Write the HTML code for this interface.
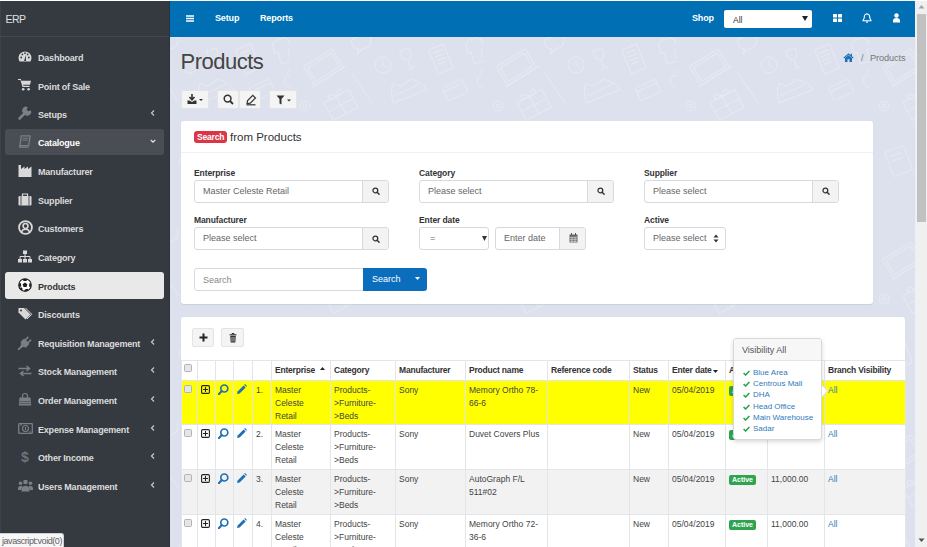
<!DOCTYPE html>
<html><head><meta charset="utf-8">
<style>
*{box-sizing:border-box;margin:0;padding:0}
html,body{width:927px;height:547px;overflow:hidden}
body{position:relative;background:#dde1ed;font-family:"Liberation Sans",sans-serif;color:#333}
.abs{position:absolute}
#topline{left:0;top:0;width:927px;height:1px;background:#fff;z-index:50}
#side{left:0;top:0;width:170px;height:547px;background:#353940;border-right:1px solid #2e3238;box-shadow:inset 1px 0 0 #3d4148}
#brand{left:0;top:0;width:169px;height:37px;border-bottom:1px solid #42474e;color:#e0e0e0;font-size:10.5px;padding:13px 0 0 5.5px;letter-spacing:-0.5px}
.mi{position:absolute;left:5px;width:159px;height:26px;color:#dcdcdc;font-weight:bold;font-size:9px;letter-spacing:-0.2px;border-radius:3px}
.mi .t{position:absolute;left:33px;top:8.7px;white-space:nowrap}
.mi .ic{position:absolute;left:13px;top:6px;width:14px;height:14px;overflow:visible}
.mi .ch{position:absolute;left:144px;top:8px;width:8px;height:8px}
.mi.cat{background:#4a4e54;color:#fff}
.mi.act{background:#e9e9e9;color:#333}
.mi.act .t{top:9.7px}
#top{left:170px;top:0;width:746px;height:37px;background:#006fb4;color:#fff}
#top .n{position:absolute;top:13px;font-size:9px;font-weight:bold;white-space:nowrap;letter-spacing:-0.15px}
#scroll{left:915px;top:0;width:12px;height:547px;background:#f0f0f0}
#thumb{left:917px;top:14px;width:9px;height:208px;background:#c1c1c1}
h1{position:absolute;left:180.5px;top:48.5px;font-size:22px;font-weight:normal;color:#444;white-space:nowrap;letter-spacing:-0.5px}
.btn{position:absolute;background:#f4f4f4;border:1px solid #e4e4e4;border-radius:2px}
.card{position:absolute;background:#fff;border-radius:3px;box-shadow:0 1px 1px rgba(0,0,0,.08)}
.lbl{position:absolute;font-size:8.5px;font-weight:bold;color:#333;white-space:nowrap;letter-spacing:-0.1px}
.inp{position:absolute;height:23px;border:1px solid #d6d9de;border-radius:3px;background:#fff;font-size:9px;color:#666;padding:5px 0 0 8px;white-space:nowrap}
.add{position:absolute;top:0;right:0;width:26px;height:21px;background:#f3f3f3;border-left:1px solid #d6d9de;border-radius:0 3px 3px 0}

table{border-collapse:collapse;table-layout:fixed;position:absolute;left:181px;top:360px;font-size:9px;color:#333}
td,th{border:1px solid #e3e5e8;padding:0 0 0 3px;vertical-align:top;text-align:left;white-space:normal}
th{height:20px;font-weight:bold;font-size:8.5px;padding-top:4px;white-space:nowrap;letter-spacing:-0.2px}
td{height:45px;padding-top:3px;line-height:13px;font-size:8.5px;white-space:nowrap;overflow:hidden;color:#444}
tr.y td{background:#ffff00;height:44px}
tr.g td{background:#f2f2f2}
.cb{display:block;width:8px;height:8px;border:1px solid #b3b3b3;border-radius:1.5px;background:#e6e6e6;margin:0 0 0 0}
th:first-child,td:first-child{padding-left:2px}
th:first-child .cb{margin-top:-1px}
td:first-child .cb{margin-top:0.5px}
.lnk{color:#2f7bbd}
.badge{display:inline-block;background:#2ea44f;color:#fff;font-size:7px;font-weight:bold;padding:1px 3px;border-radius:2px;line-height:8px}
.pop{position:absolute;left:733px;top:338px;width:89px;height:102px;background:#fff;border:1px solid #d9d9d9;border-radius:3px;box-shadow:0 2px 4px rgba(0,0,0,.15);font-size:8px}
.pop .hd{height:22px;background:#f7f7f7;border-bottom:1px solid #e5e5e5;padding:5.7px 0 0 8px;font-size:9px;color:#555;border-radius:3px 3px 0 0}
.pop .it{position:absolute;left:9px;color:#2f7bbd;white-space:nowrap;padding-left:10px}
.pop .it b{color:#2ea44f;margin-right:3px;font-size:8px}
#status{left:0;top:533px;width:64px;height:14px;background:#f7f7f7;border:1px solid #d0d0d0;border-left:0;border-bottom:0;border-radius:0 3px 0 0;font-size:9px;color:#606060;padding:2px 0 0 2px;white-space:nowrap;letter-spacing:-0.45px}
</style></head><body>
<div id="topline" class="abs"></div>
<div id="side" class="abs">
  <div id="brand" class="abs">ERP</div>
  <div class="mi" style="top:44px"><svg class="ic" viewBox="0 0 14 12" style="top:6px;width:14px;height:12px"><path d="M1.5 11.5 A6.5 6.5 0 1 1 12.5 11.5 Z" fill="#d9d9d9"/><circle cx="3.2" cy="7.5" r=".9" fill="#353940"/><circle cx="4.4" cy="4.4" r=".9" fill="#353940"/><circle cx="7" cy="3.2" r=".9" fill="#353940"/><circle cx="9.6" cy="4.4" r=".9" fill="#353940"/><circle cx="10.8" cy="7.5" r=".9" fill="#353940"/><path d="M6.1 11 L7.8 5 L8.1 11Z" fill="#353940"/></svg><span class="t">Dashboard</span></div>
  <div class="mi" style="top:73px"><svg class="ic" viewBox="0 0 14 12" style="top:6px;width:14px;height:12px"><path d="M0 1 H2.5 L4.5 8 H11.5 V6.8 H5.4 L5.1 5.8 H12 L13 1.8 H3.3 L2.9 0 H0Z" fill="#d9d9d9"/><rect x="5" y="2.6" width="6.5" height="2.4" fill="#d9d9d9"/><circle cx="5.2" cy="10.2" r="1.3" fill="#d9d9d9"/><circle cx="10.6" cy="10.2" r="1.3" fill="#d9d9d9"/></svg><span class="t">Point of Sale</span></div>
  <div class="mi" style="top:101px"><svg class="ic" viewBox="0 0 14 14" style="top:5px;width:14px;height:14px"><path d="M1.5 12.5 L7 7" stroke="#7b7f85" stroke-width="2.6" stroke-linecap="round"/><path d="M6 7.5 A3.6 3.6 0 0 0 12.8 4.3 L10.8 5.2 L9.2 4.6 L8.8 3.2 L9.8 1.2 A3.6 3.6 0 0 0 6 7.5Z" fill="#7b7f85"/></svg><span class="t">Setups</span><svg class="ch" viewBox="0 0 8 8"><path d="M5 1.5 L2.5 4 L5 6.5" fill="none" stroke="#c8c8c8" stroke-width="1.2"/></svg></div>
  <div class="mi cat" style="top:129px"><svg class="ic" viewBox="0 0 14 14" style="top:6px;width:14px;height:13px"><path d="M3 1 H12.5 L11 11.5 H1.5 Z" fill="none" stroke="#7b7f85" stroke-width="1.4"/><path d="M1.5 11.5 L1.2 13 H11 " fill="none" stroke="#7b7f85" stroke-width="1.2"/><path d="M4.5 3.5 H10.5 M4.2 5.5 H10" stroke="#7b7f85" stroke-width="1"/></svg><span class="t">Catalogue</span><svg class="ch" viewBox="0 0 8 8"><path d="M1.8 3 L4 5.2 L6.2 3" fill="none" stroke="#e0e0e0" stroke-width="1.3"/></svg></div>
  <div class="mi" style="top:158px"><svg class="ic" viewBox="0 0 14 13" style="top:6px;width:14px;height:13px"><path d="M0.5 13 V1 H3 V5 L6.5 2.5 V5 L10 2.5 V5 L13.5 2.5 V13Z" fill="#d9d9d9"/></svg><span class="t">Manufacturer</span></div>
  <div class="mi" style="top:187px"><svg class="ic" viewBox="0 0 14 13" style="top:6px;width:14px;height:13px"><rect x="0.5" y="3" width="13" height="9.5" rx="1.2" fill="#d9d9d9"/><path d="M4.5 3 V1 H9.5 V3" fill="none" stroke="#d9d9d9" stroke-width="1.2"/><path d="M3 3 V12.5 M11 3 V12.5" stroke="#353940" stroke-width="0.8"/></svg><span class="t">Supplier</span></div>
  <div class="mi" style="top:215px"><svg class="ic" viewBox="0 0 14 14" style="top:5px;width:15px;height:15px"><circle cx="7" cy="7" r="6" fill="none" stroke="#d9d9d9" stroke-width="1.7"/><circle cx="7" cy="5.6" r="2.3" fill="none" stroke="#d9d9d9" stroke-width="1.5"/><path d="M3.2 11.3 Q4 8.6 7 8.6 Q10 8.6 10.8 11.3" fill="none" stroke="#d9d9d9" stroke-width="1.5"/></svg><span class="t">Customers</span></div>
  <div class="mi" style="top:244px"><svg class="ic" viewBox="0 0 14 13" style="top:6px;width:14px;height:13px"><rect x="5" y="0.5" width="4" height="3.5" fill="#d9d9d9"/><path d="M7 4 V6.5 M2 9 V6.5 H12 V9 M7 6.5 V9" stroke="#d9d9d9" stroke-width="1" fill="none"/><rect x="0" y="9" width="4" height="3.5" fill="#d9d9d9"/><rect x="5" y="9" width="4" height="3.5" fill="#d9d9d9"/><rect x="10" y="9" width="4" height="3.5" fill="#d9d9d9"/></svg><span class="t">Category</span></div>
  <div class="mi act" style="top:272px;height:27px"><svg class="ic" viewBox="0 0 14 14" style="top:6px;width:14px;height:14px"><circle cx="7" cy="7" r="6.3" fill="#fff" stroke="#1e1e1e" stroke-width="1.1"/><path d="M7 4.5 L9.4 6.3 L8.5 9.1 H5.5 L4.6 6.3Z" fill="#1e1e1e"/><path d="M4.6 1.2 Q7 0.2 9.4 1.2 L8.4 3 H5.6Z M12.6 4.4 Q13.4 6.8 12.7 9.4 L11 8.2 L11.3 5.6Z M10.7 12.2 Q8.6 13.6 6.1 13.5 L6.8 11.6 L9.4 10.7Z M1.4 9.4 Q0.6 6.8 1.4 4.4 L3 5.6 L3.3 8.2Z M3.5 12.4 Q1.9 11 1.5 9.9 L3.4 9.3 L4.8 10.9Z" fill="#1e1e1e"/></svg><span class="t">Products</span></div>
  <div class="mi" style="top:301px"><svg class="ic" viewBox="0 0 14 13" style="top:6px;width:14px;height:13px"><path d="M0.5 1 H6 L12.5 7.5 L7.5 12.5 L0.5 5.5Z" fill="#d9d9d9"/><circle cx="3" cy="3.4" r="1" fill="#353940"/><path d="M7.5 1 L13.8 7.3 L9 12" fill="none" stroke="#d9d9d9" stroke-width="1"/></svg><span class="t">Discounts</span></div>
  <div class="mi" style="top:330px"><svg class="ic" viewBox="0 0 14 14" style="top:5px;left:12px;width:16px;height:16px"><g transform="rotate(45 7 7)"><rect x="3.6" y="4.6" width="6.8" height="5.2" rx="1.3" fill="#7b7f85"/><path d="M5.3 4.8 V1.2 M8.7 4.8 V1.2" stroke="#7b7f85" stroke-width="1.4"/><path d="M5.2 9.6 H8.8 L8 12 H6Z" fill="#7b7f85"/><path d="M7 11.5 V15.5" stroke="#7b7f85" stroke-width="1.6"/></g></svg><span class="t">Requisition Management</span><svg class="ch" viewBox="0 0 8 8"><path d="M5 1.5 L2.5 4 L5 6.5" fill="none" stroke="#c8c8c8" stroke-width="1.2"/></svg></div>
  <div class="mi" style="top:358px"><svg class="ic" viewBox="0 0 14 12" style="top:7px;width:14px;height:12px"><path d="M0.5 3.5 H11 M8.5 1 L11.5 3.5 L8.5 6 M13.5 8.5 H3 M5.5 6 L2.5 8.5 L5.5 11" fill="none" stroke="#7b7f85" stroke-width="1.5"/></svg><span class="t">Stock Management</span><svg class="ch" viewBox="0 0 8 8"><path d="M5 1.5 L2.5 4 L5 6.5" fill="none" stroke="#c8c8c8" stroke-width="1.2"/></svg></div>
  <div class="mi" style="top:387px"><svg class="ic" viewBox="0 0 14 14" style="top:5px;width:14px;height:14px"><path d="M1.5 5.5 H12.5 L13.2 13.5 H0.8Z" fill="#7b7f85"/><path d="M4.5 7 V4 A2.5 2.5 0 0 1 9.5 4 V7" fill="none" stroke="#7b7f85" stroke-width="1.2"/><path d="M1.5 9.5 H12.5 M1.3 11.5 H12.7" stroke="#353940" stroke-width=".5"/></svg><span class="t">Order Management</span><svg class="ch" viewBox="0 0 8 8"><path d="M5 1.5 L2.5 4 L5 6.5" fill="none" stroke="#c8c8c8" stroke-width="1.2"/></svg></div>
  <div class="mi" style="top:416px"><svg class="ic" viewBox="0 0 15 11" style="top:7px;width:15px;height:11px"><rect x="0.7" y="0.7" width="13.6" height="9.6" rx=".5" fill="none" stroke="#7b7f85" stroke-width="1.3"/><circle cx="7.5" cy="5.5" r="3" fill="none" stroke="#7b7f85" stroke-width="1.1"/><path d="M7.5 4 V7" stroke="#7b7f85" stroke-width="1"/><path d="M2 2 H4 M11 9 H13" stroke="#7b7f85" stroke-width="1"/></svg><span class="t">Expense Management</span><svg class="ch" viewBox="0 0 8 8"><path d="M5 1.5 L2.5 4 L5 6.5" fill="none" stroke="#c8c8c8" stroke-width="1.2"/></svg></div>
  <div class="mi" style="top:444px"><svg class="ic" viewBox="0 0 14 14" style="top:5px;width:14px;height:15px"><text x="3" y="12.5" font-size="14" font-family="Liberation Sans" fill="#6f737a">$</text></svg><span class="t">Other Income</span><svg class="ch" viewBox="0 0 8 8"><path d="M5 1.5 L2.5 4 L5 6.5" fill="none" stroke="#c8c8c8" stroke-width="1.2"/></svg></div>
  <div class="mi" style="top:473px"><svg class="ic" viewBox="0 0 15 13" style="top:6px;width:15px;height:13px"><circle cx="7.5" cy="3" r="2.3" fill="#7b7f85"/><circle cx="2.5" cy="4.2" r="1.8" fill="#7b7f85"/><circle cx="12.5" cy="4.2" r="1.8" fill="#7b7f85"/><path d="M3.5 12.5 V9 Q7.5 4.5 11.5 9 V12.5Z" fill="#7b7f85"/><path d="M0 11 V8.5 Q2.5 5.5 4.5 7.5 L3 11Z M15 11 V8.5 Q12.5 5.5 10.5 7.5 L12 11Z" fill="#7b7f85"/></svg><span class="t">Users Management</span><svg class="ch" viewBox="0 0 8 8"><path d="M5 1.5 L2.5 4 L5 6.5" fill="none" stroke="#c8c8c8" stroke-width="1.2"/></svg></div>
</div>
<svg class="abs" style="left:170px;top:37px;width:745px;height:510px" width="745" height="510"><defs><pattern id="bgp" patternUnits="userSpaceOnUse" width="193" height="193" x="120" y="0"><g fill="none" stroke="#e7e9f1" stroke-width="1">
<g transform="translate(34,31) rotate(-32)"><rect x="-17" y="-12" width="34" height="22" rx="1.5"/><rect x="-14" y="-9" width="28" height="16"/><path d="M-20 10 H20"/></g>
<circle cx="93" cy="28" r="8"/><path d="M93 23 V28 L97 30"/>
<g transform="translate(117,20) rotate(-20)"><path d="M-5 -8 Q-6 2 0 3 Q6 2 5 -8Z M0 3 V12 M-4 12 H4"/></g>
<g transform="translate(151,22) rotate(-22)"><rect x="-8" y="-13" width="16" height="26"/><path d="M-5 -8 H5 M-5 -4 H5 M-5 0 H5 M-5 4 H3"/></g>
<g transform="translate(186,14) rotate(-15)"><path d="M-8 -10 L-3 -13 Q0 -10 3 -13 L8 -10 L9 0 L5 0 L5 12 L-5 12 L-5 0 L-9 0Z"/></g>
<path d="M62 36 L82 66"/>
<g transform="translate(117,53) rotate(-25)"><path d="M-18 6 Q-16 -6 -10 -12 L-4 -6 L8 -8 Q18 0 18 8 Z M-14 0 H14"/></g>
<g transform="translate(51,68) rotate(-28)"><rect x="-14" y="-10" width="28" height="20"/><path d="M0 -10 V10 M-14 0 H14 M0 -10 Q-6 -18 -8 -12 Q-4 -8 0 -10 Q6 -18 8 -12 Q4 -8 0 -10"/></g>
<g transform="translate(165,53) rotate(-25)"><rect x="-11" y="-7" width="22" height="14" rx="1.5"/><path d="M-11 -3 H11"/></g>
<circle cx="193" cy="44" r="6"/><path d="M190 36 L193 32 L196 36"/>
<circle cx="15" cy="69" r="5"/><circle cx="15" cy="69" r="2"/>
<g transform="translate(72,8) rotate(-10)"><path d="M-10 -6 Q0 -12 10 -6 Q10 4 0 4 L-6 8 L-4 3 Q-10 2 -10 -6Z"/></g>
<g transform="translate(30,125) rotate(-20)"><rect x="-10" y="-14" width="20" height="26" rx="2"/><path d="M-6 -8 H6 M-6 -3 H6"/></g>
<g transform="translate(95,120) rotate(25)"><path d="M-14 -2 L0 -10 L14 -2 M-10 -4 V10 H10 V-4 M-4 10 V2 H4 V10"/></g>
<g transform="translate(150,140) rotate(-30)"><rect x="-16" y="-11" width="32" height="22"/><path d="M-16 -5 H16"/></g>
<circle cx="60" cy="165" r="7"/>
<g transform="translate(175,110) rotate(30)"><path d="M-8 -8 L0 -14 L8 -8 L10 12 L-10 12Z"/></g>
</g></pattern></defs><rect width="745" height="510" fill="url(#bgp)"/></svg>
<div id="top" class="abs">
  <svg class="abs" style="left:16px;top:15px;width:8px;height:7px" viewBox="0 0 8 7"><path d="M0 1 H8 M0 3.5 H8 M0 6 H8" stroke="#fff" stroke-width="1.4"/></svg>
  <span class="n" style="left:45px">Setup</span>
  <span class="n" style="left:90px">Reports</span>
  <span class="n" style="left:522px">Shop</span>
  <div class="abs" style="left:554px;top:10px;width:88px;height:18px;background:#fff;border-radius:2px;color:#333;font-size:8.5px;padding:5px 0 0 9px">All<svg class="abs" style="left:78px;top:6px;width:6px;height:5px" viewBox="0 0 6 5"><path d="M0 0 H6 L3 5Z" fill="#222"/></svg></div>
  <svg class="abs" style="left:663px;top:14px;width:9px;height:8px" viewBox="0 0 9 8"><rect x="0" y="0" width="4" height="3.5" rx=".6" fill="#fff"/><rect x="5" y="0" width="4" height="3.5" rx=".6" fill="#fff"/><rect x="0" y="4.5" width="4" height="3.5" rx=".6" fill="#fff"/><rect x="5" y="4.5" width="4" height="3.5" rx=".6" fill="#fff"/></svg>
  <svg class="abs" style="left:692px;top:13px;width:10px;height:10px" viewBox="0 0 10 10"><path d="M5 1 C2.5 1 2.2 3 2.2 5 L1 7.8 H9 L7.8 5 C7.8 3 7.5 1 5 1Z" fill="none" stroke="#fff" stroke-width="1.1"/><path d="M4 8.6 A1 1 0 0 0 6 8.6" fill="#fff" stroke="#fff" stroke-width=".6"/><circle cx="5" cy=".8" r=".6" fill="#fff"/></svg>
  <svg class="abs" style="left:723px;top:13px;width:7px;height:10px" viewBox="0 0 7 10"><circle cx="3.5" cy="2.5" r="2.2" fill="#fff"/><path d="M0 9.5 V7.5 Q0 5 3.5 5 Q7 5 7 7.5 V9.5Z" fill="#fff"/></svg>
</div>
<div id="scroll" class="abs"></div>
<div id="thumb" class="abs"></div>
<svg class="abs" style="left:918px;top:4px;width:7px;height:5px" viewBox="0 0 7 5"><path d="M0.5 4.5 L3.5 1 L6.5 4.5Z" fill="#a3a3a3"/></svg>
<svg class="abs" style="left:918px;top:538px;width:7px;height:5px" viewBox="0 0 7 5"><path d="M0.5 0.5 L3.5 4 L6.5 0.5Z" fill="#505050"/></svg>
<h1>Products</h1>
<svg class="abs" style="left:843px;top:53px;width:11px;height:9px" viewBox="0 0 11 9"><path d="M5.5 0.3 L0.3 4.8 L1.1 5.6 L5.5 1.8 L9.9 5.6 L10.7 4.8 L9 3.3 V0.8 H7.8 V2.3Z" fill="#1f6fb5"/><path d="M2 5 L5.5 2.2 L9 5 V9 H6.5 V6.2 H4.5 V9 H2Z" fill="#1f6fb5"/></svg>
<span class="abs" style="left:861px;top:53px;font-size:9px;color:#777;white-space:nowrap">/</span>
<span class="abs" style="left:870px;top:53px;font-size:9.2px;color:#777;white-space:nowrap;letter-spacing:-0.1px">Products</span>

<div class="btn" style="left:181px;top:90px;width:28px;height:19px"><svg class="abs" style="left:5px;top:3px;width:18px;height:11px" viewBox="0 0 18 11"><path d="M5 0 V5 M2.5 3 L5 5.8 L7.5 3" fill="none" stroke="#333" stroke-width="1.6"/><path d="M0.5 6.5 V10 H9.5 V6.5 H7.5 L5 8 L2.5 6.5Z" fill="#333"/><path d="M12 5 H16 L14 7Z" fill="#333"/></svg></div>
<div class="btn" style="left:217px;top:90px;width:22px;height:19px"><svg class="abs" style="left:5px;top:3px;width:11px;height:11px" viewBox="0 0 11 11"><circle cx="4.6" cy="4.6" r="3.4" fill="none" stroke="#333" stroke-width="1.5"/><path d="M7 7 L10 10" stroke="#333" stroke-width="1.8"/></svg></div>
<div class="btn" style="left:239px;top:90px;width:22px;height:19px"><svg class="abs" style="left:5px;top:3px;width:12px;height:12px" viewBox="0 0 12 12"><path d="M2 9.5 L2.6 6.5 L7.8 1.3 L10.5 4 L5.3 9.2Z" fill="none" stroke="#333" stroke-width="1.2"/><path d="M1.5 10.8 H10.5" stroke="#333" stroke-width="1.2"/></svg></div>
<div class="btn" style="left:269px;top:90px;width:28px;height:19px"><svg class="abs" style="left:6px;top:4px;width:16px;height:10px" viewBox="0 0 16 10"><path d="M0.5 0.5 H8.5 L5.5 4 V9.5 L3.5 8.5 V4Z" fill="#333"/><path d="M11 4.5 H15 L13 6.5Z" fill="#333"/></svg></div>

<div class="card" style="left:181px;top:121px;width:692px;height:183px">
  <div class="abs" style="left:0;top:31px;width:692px;height:1px;background:#eef0f3"></div>
  <span class="abs" style="left:13px;top:10px;width:33px;height:12px;background:#dc3545;color:#fff;font-size:8.5px;font-weight:bold;padding:1px 0 0 3px;border-radius:3px;line-height:11px;letter-spacing:-0.2px">Search</span>
  <span class="abs" style="left:49px;top:9.5px;font-size:11.5px;color:#333;white-space:nowrap">from Products</span>
</div>
<span class="lbl" style="left:194px;top:168px">Enterprise</span>
<span class="lbl" style="left:419px;top:168px">Category</span>
<span class="lbl" style="left:644px;top:168px">Supplier</span>
<span class="lbl" style="left:194px;top:215px">Manufacturer</span>
<span class="lbl" style="left:419px;top:215px">Enter date</span>
<span class="lbl" style="left:644px;top:215px">Active</span>
<div class="inp" style="left:194px;top:180px;width:195px">Master Celeste Retail<div class="add"><svg class="abs" style="left:9px;top:6px;width:8px;height:9px" viewBox="0 0 9 10"><circle cx="3.8" cy="3.8" r="2.7" fill="none" stroke="#333" stroke-width="1.4"/><path d="M5.8 5.8 L8 8.2" stroke="#333" stroke-width="1.6" stroke-linecap="round"/></svg></div></div>
<div class="inp" style="left:419px;top:180px;width:195px">Please select<div class="add"><svg class="abs" style="left:9px;top:6px;width:8px;height:9px" viewBox="0 0 9 10"><circle cx="3.8" cy="3.8" r="2.7" fill="none" stroke="#333" stroke-width="1.4"/><path d="M5.8 5.8 L8 8.2" stroke="#333" stroke-width="1.6" stroke-linecap="round"/></svg></div></div>
<div class="inp" style="left:644px;top:180px;width:195px">Please select<div class="add"><svg class="abs" style="left:9px;top:6px;width:8px;height:9px" viewBox="0 0 9 10"><circle cx="3.8" cy="3.8" r="2.7" fill="none" stroke="#333" stroke-width="1.4"/><path d="M5.8 5.8 L8 8.2" stroke="#333" stroke-width="1.6" stroke-linecap="round"/></svg></div></div>
<div class="inp" style="left:194px;top:227px;width:195px;height:23px">Please select<div class="add" style="height:21px"><svg class="abs" style="left:9px;top:6.5px;width:8px;height:9px" viewBox="0 0 9 10"><circle cx="3.8" cy="3.8" r="2.7" fill="none" stroke="#333" stroke-width="1.4"/><path d="M5.8 5.8 L8 8.2" stroke="#333" stroke-width="1.6" stroke-linecap="round"/></svg></div></div>
<div class="inp" style="left:419px;top:227px;width:70px;height:23px;padding-left:10px">=<svg class="abs" style="left:62px;top:8px;width:5px;height:5px" viewBox="0 0 5 5"><path d="M0 0 H5 L2.5 5Z" fill="#333"/></svg></div>
<div class="inp" style="left:495px;top:227px;width:91px;height:23px">Enter date<div class="add" style="height:21px;width:26px"><svg class="abs" style="left:9px;top:5px;width:9px;height:10px" viewBox="0 0 9 10"><rect x="0.5" y="1.5" width="8" height="8" fill="#666"/><path d="M2.5 0 V2 M6.5 0 V2" stroke="#555" stroke-width="1"/><path d="M1 4.3 H8 M1 6.3 H8 M1 8.3 H8 M3 4 V9.5 M6 4 V9.5" stroke="#f3f3f3" stroke-width=".6"/></svg></div></div>
<div class="inp" style="left:644px;top:227px;width:82px;height:23px">Please select<svg class="abs" style="left:68px;top:6px;width:6px;height:9px" viewBox="0 0 6 9"><path d="M0.5 3.5 L3 0.5 L5.5 3.5Z M0.5 5.5 L3 8.5 L5.5 5.5Z" fill="#333"/></svg></div>
<div class="inp" style="left:194px;top:267.5px;width:170px;height:23px;border-radius:3px 0 0 3px;color:#888;padding-top:6.5px">Search</div>
<div class="abs" style="left:363px;top:267.5px;width:64px;height:23px;background:#0a6ebd;border-radius:0 3px 3px 0;color:#fff;font-size:9px;padding:6.5px 0 0 9px">Search</div>
<svg class="abs" style="left:415px;top:277px;width:5px;height:3px" viewBox="0 0 5 3"><path d="M0 0 H5 L2.5 3Z" fill="#fff"/></svg>

<div class="card" style="left:181px;top:317px;width:724px;height:240px"></div>
<div class="btn" style="left:192px;top:328px;width:22px;height:19px"><svg class="abs" style="left:6px;top:4px;width:9px;height:9px" viewBox="0 0 9 9"><path d="M4.5 0.5 V8.5 M0.5 4.5 H8.5" stroke="#222" stroke-width="2"/></svg></div>
<div class="btn" style="left:221px;top:328px;width:23px;height:19px"><svg class="abs" style="left:7px;top:4px;width:8px;height:10px" viewBox="0 0 8 10"><path d="M0.5 1.8 H7.5 M3 1.8 V0.5 H5 V1.8" fill="none" stroke="#333" stroke-width="1"/><path d="M1.2 2.8 H6.8 L6.3 9.5 H1.7Z" fill="#333"/><path d="M3 4 V8.5 M5 4 V8.5" stroke="#f4f4f4" stroke-width=".7"/></svg></div>

<table>
<colgroup><col style="width:16px"><col style="width:18px"><col style="width:18px"><col style="width:19px"><col style="width:19px"><col style="width:59px"><col style="width:65px"><col style="width:70px"><col style="width:82px"><col style="width:82px"><col style="width:39px"><col style="width:57px"><col style="width:42px"><col style="width:57px"><col style="width:81px"></colgroup>
<tr><th><span class="cb"></span></th><th></th><th></th><th></th><th></th><th>Enterprise<svg style="position:absolute;margin:2px 0 0 5px;width:5px;height:3px" viewBox="0 0 5 3"><path d="M0 3 H5 L2.5 0Z" fill="#222"/></svg></th><th>Category</th><th>Manufacturer</th><th>Product name</th><th>Reference code</th><th>Status</th><th>Enter date<svg style="position:absolute;margin:5px 0 0 1px;width:5px;height:3px" viewBox="0 0 5 3"><path d="M0 0 H5 L2.5 3Z" fill="#222"/></svg></th><th>Active</th><th>Price</th><th>Branch Visibility</th></tr>
<tr class="y"><td><span class="cb"></span></td><td><svg style="display:block;margin:1px 0 0 0;width:9px;height:9px" viewBox="0 0 9 9"><rect x=".6" y=".6" width="7.8" height="7.8" rx="1.2" fill="none" stroke="#222" stroke-width="1.1"/><path d="M4.5 2 V7 M2 4.5 H7" stroke="#222" stroke-width="1.1"/></svg></td><td><svg style="display:block;margin:0 0 0 -1px;width:11px;height:11px" viewBox="0 0 11 11"><circle cx="6.3" cy="4.5" r="3.5" fill="none" stroke="#1f6fb5" stroke-width="1.7"/><path d="M3.8 7 L0.8 10.2" stroke="#1f6fb5" stroke-width="2" stroke-linecap="round"/></svg></td><td><svg style="display:block;margin:0 0 0 -1px;width:11px;height:11px" viewBox="0 0 11 11"><path d="M1 10 L1.6 7.4 L7.6 1.4 L9.6 3.4 L3.6 9.4Z" fill="#1f6fb5"/><path d="M8.2 0.8 L9 0 L11 2 L10.2 2.8Z" fill="#1f6fb5"/></svg></td><td>1.</td><td>Master<br>Celeste<br>Retail</td><td>Products-<br>&gt;Furniture-<br>&gt;Beds</td><td>Sony</td><td>Memory Ortho 78-<br>66-6</td><td></td><td>New</td><td>05/04/2019</td><td><span class="badge">Active</span></td><td>11,000.00</td><td><span class="lnk">All</span></td></tr>
<tr><td><span class="cb"></span></td><td><svg style="display:block;margin:1px 0 0 0;width:9px;height:9px" viewBox="0 0 9 9"><rect x=".6" y=".6" width="7.8" height="7.8" rx="1.2" fill="none" stroke="#222" stroke-width="1.1"/><path d="M4.5 2 V7 M2 4.5 H7" stroke="#222" stroke-width="1.1"/></svg></td><td><svg style="display:block;margin:0 0 0 -1px;width:11px;height:11px" viewBox="0 0 11 11"><circle cx="6.3" cy="4.5" r="3.5" fill="none" stroke="#1f6fb5" stroke-width="1.7"/><path d="M3.8 7 L0.8 10.2" stroke="#1f6fb5" stroke-width="2" stroke-linecap="round"/></svg></td><td><svg style="display:block;margin:0 0 0 -1px;width:11px;height:11px" viewBox="0 0 11 11"><path d="M1 10 L1.6 7.4 L7.6 1.4 L9.6 3.4 L3.6 9.4Z" fill="#1f6fb5"/><path d="M8.2 0.8 L9 0 L11 2 L10.2 2.8Z" fill="#1f6fb5"/></svg></td><td>2.</td><td>Master<br>Celeste<br>Retail</td><td>Products-<br>&gt;Furniture-<br>&gt;Beds</td><td>Sony</td><td>Duvet Covers Plus</td><td></td><td>New</td><td>05/04/2019</td><td><span class="badge">Active</span></td><td>11,000.00</td><td><span class="lnk">All</span></td></tr>
<tr class="g"><td><span class="cb"></span></td><td><svg style="display:block;margin:1px 0 0 0;width:9px;height:9px" viewBox="0 0 9 9"><rect x=".6" y=".6" width="7.8" height="7.8" rx="1.2" fill="none" stroke="#222" stroke-width="1.1"/><path d="M4.5 2 V7 M2 4.5 H7" stroke="#222" stroke-width="1.1"/></svg></td><td><svg style="display:block;margin:0 0 0 -1px;width:11px;height:11px" viewBox="0 0 11 11"><circle cx="6.3" cy="4.5" r="3.5" fill="none" stroke="#1f6fb5" stroke-width="1.7"/><path d="M3.8 7 L0.8 10.2" stroke="#1f6fb5" stroke-width="2" stroke-linecap="round"/></svg></td><td><svg style="display:block;margin:0 0 0 -1px;width:11px;height:11px" viewBox="0 0 11 11"><path d="M1 10 L1.6 7.4 L7.6 1.4 L9.6 3.4 L3.6 9.4Z" fill="#1f6fb5"/><path d="M8.2 0.8 L9 0 L11 2 L10.2 2.8Z" fill="#1f6fb5"/></svg></td><td>3.</td><td>Master<br>Celeste<br>Retail</td><td>Products-<br>&gt;Furniture-<br>&gt;Beds</td><td>Sony</td><td>AutoGraph F/L<br>511#02</td><td></td><td>New</td><td>05/04/2019</td><td><span class="badge">Active</span></td><td>11,000.00</td><td><span class="lnk">All</span></td></tr>
<tr><td><span class="cb"></span></td><td><svg style="display:block;margin:1px 0 0 0;width:9px;height:9px" viewBox="0 0 9 9"><rect x=".6" y=".6" width="7.8" height="7.8" rx="1.2" fill="none" stroke="#222" stroke-width="1.1"/><path d="M4.5 2 V7 M2 4.5 H7" stroke="#222" stroke-width="1.1"/></svg></td><td><svg style="display:block;margin:0 0 0 -1px;width:11px;height:11px" viewBox="0 0 11 11"><circle cx="6.3" cy="4.5" r="3.5" fill="none" stroke="#1f6fb5" stroke-width="1.7"/><path d="M3.8 7 L0.8 10.2" stroke="#1f6fb5" stroke-width="2" stroke-linecap="round"/></svg></td><td><svg style="display:block;margin:0 0 0 -1px;width:11px;height:11px" viewBox="0 0 11 11"><path d="M1 10 L1.6 7.4 L7.6 1.4 L9.6 3.4 L3.6 9.4Z" fill="#1f6fb5"/><path d="M8.2 0.8 L9 0 L11 2 L10.2 2.8Z" fill="#1f6fb5"/></svg></td><td>4.</td><td>Master<br>Celeste<br>Retail</td><td>Products-<br>&gt;Furniture-<br>&gt;Beds</td><td>Sony</td><td>Memory Ortho 72-<br>36-6</td><td></td><td>New</td><td>05/04/2019</td><td><span class="badge">Active</span></td><td>11,000.00</td><td><span class="lnk">All</span></td></tr>
</table>

<div class="pop">
  <div class="hd">Visibility All</div>
  <svg style="position:absolute;left:88px;top:46px;width:6px;height:12px" viewBox="0 0 6 12"><path d="M0 0 L6 6 L0 12Z" fill="#fff"/><path d="M0 0 L5.5 6 L0 12" fill="none" stroke="#d9d9d9" stroke-width="1"/></svg>
  <div class="it" style="top:28.8px"><svg style="position:absolute;left:0;top:2px;width:7px;height:6px" viewBox="0 0 7 6"><path d="M0.6 3 L2.6 5 L6.4 1" fill="none" stroke="#2ea44f" stroke-width="1.6"/></svg>Blue Area</div>
  <div class="it" style="top:40.1px"><svg style="position:absolute;left:0;top:2px;width:7px;height:6px" viewBox="0 0 7 6"><path d="M0.6 3 L2.6 5 L6.4 1" fill="none" stroke="#2ea44f" stroke-width="1.6"/></svg>Centrous Mall</div>
  <div class="it" style="top:51.4px"><svg style="position:absolute;left:0;top:2px;width:7px;height:6px" viewBox="0 0 7 6"><path d="M0.6 3 L2.6 5 L6.4 1" fill="none" stroke="#2ea44f" stroke-width="1.6"/></svg>DHA</div>
  <div class="it" style="top:62.7px"><svg style="position:absolute;left:0;top:2px;width:7px;height:6px" viewBox="0 0 7 6"><path d="M0.6 3 L2.6 5 L6.4 1" fill="none" stroke="#2ea44f" stroke-width="1.6"/></svg>Head Office</div>
  <div class="it" style="top:74px"><svg style="position:absolute;left:0;top:2px;width:7px;height:6px" viewBox="0 0 7 6"><path d="M0.6 3 L2.6 5 L6.4 1" fill="none" stroke="#2ea44f" stroke-width="1.6"/></svg>Main Warehouse</div>
  <div class="it" style="top:85.3px"><svg style="position:absolute;left:0;top:2px;width:7px;height:6px" viewBox="0 0 7 6"><path d="M0.6 3 L2.6 5 L6.4 1" fill="none" stroke="#2ea44f" stroke-width="1.6"/></svg>Sadar</div>
</div>
<div id="status" class="abs">javascript:void(0)</div>
</body></html>
